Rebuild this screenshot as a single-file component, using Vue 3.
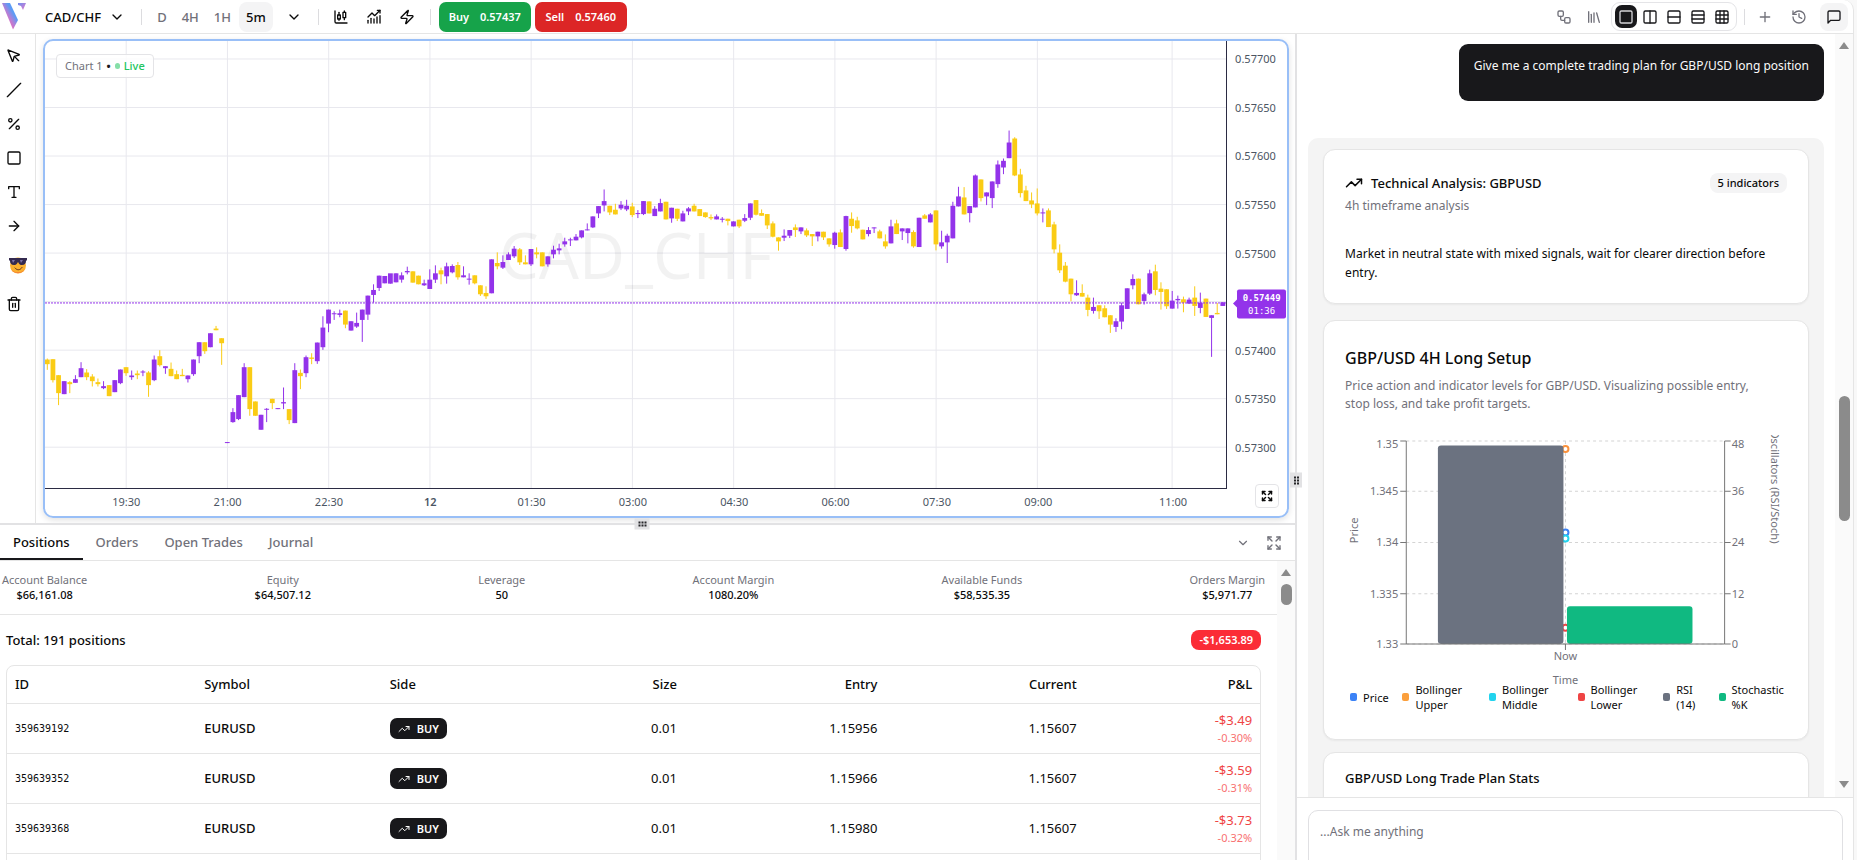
<script setup>
import { h, ref } from 'vue'

// line icons on a 24px grid
const glyphs = {
  chevron: ['m6 9 6 6 6-6'],
  candles: ['M9 5v4', 'M7 9h4v6H7z', 'M9 15v2', 'M17 3v2', 'M15 5h4v8h-4z', 'M17 13v3', 'M3 3v16a2 2 0 0 0 2 2h16'],
  indicators: ['M3 21v-4', 'M7.500 21v-7', 'M12 21v-6', 'M16.500 21v-9', 'M21 21V10', 'm3 12 6-6 4 4 8-8', 'M17 2h4v4'],
  zap: ['M4 14a1 1 0 0 1-.78-1.63l9.9-10.2a.5.5 0 0 1 .86.46l-1.92 6.02A1 1 0 0 0 13 10h7a1 1 0 0 1 .78 1.63l-9.9 10.2a.5.5 0 0 1-.86-.46l1.92-6.02A1 1 0 0 0 11 14z'],
  cursor: ['M12.586 12.586 19 19', 'M3.688 3.037a.497.497 0 0 0-.651.651l6.5 15.999a.501.501 0 0 0 .947-.062l1.569-6.083a2 2 0 0 1 1.448-1.479l6.124-1.579a.5.5 0 0 0 .063-.947z'],
  line: ['M2 22 22 2'],
  percent: ['M19 5 5 19', 'M9 6.500a2.500 2.500 0 1 1-5 0 2.500 2.500 0 0 1 5 0z', 'M20 17.500a2.500 2.500 0 1 1-5 0 2.500 2.500 0 0 1 5 0z'],
  square: ['M5 3h14a2 2 0 0 1 2 2v14a2 2 0 0 1-2 2H5a2 2 0 0 1-2-2V5a2 2 0 0 1 2-2z'],
  text: ['M4 7V4h16v3', 'M9 20h6', 'M12 4v16'],
  arrow: ['M5 12h14', 'm12 5 7 7-7 7'],
  trash: ['M3 6h18', 'M19 6v14c0 1-1 2-2 2H7c-1 0-2-1-2-2V6', 'M8 6V4c0-1 1-2 2-2h4c1 0 2 1 2 2v2', 'M10 11v6', 'M14 11v6'],
  trend: ['m22 7-8.500 8.500-5-5L2 17', 'M16 7h6v6'],
  workflow: ['M5 3h4a2 2 0 0 1 2 2v4a2 2 0 0 1-2 2H5a2 2 0 0 1-2-2V5a2 2 0 0 1 2-2z', 'M7 11v4a2 2 0 0 0 2 2h4', 'M15 13h4a2 2 0 0 1 2 2v4a2 2 0 0 1-2 2h-4a2 2 0 0 1-2-2v-4a2 2 0 0 1 2-2z'],
  library: ['m16 6 4 14', 'M12 6v14', 'M8 8v12', 'M4 4v16'],
  plus: ['M5 12h14', 'M12 5v14'],
  history: ['M3 12a9 9 0 1 0 9-9 9.750 9.750 0 0 0-6.740 2.740L3 8', 'M3 3v5h5', 'M12 7v5l4 2'],
  message: ['M21 15a2 2 0 0 1-2 2H7l-4 4V5a2 2 0 0 1 2-2h14a2 2 0 0 1 2 2z'],
  expand: ['m15 15 6 6', 'm15 9 6-6', 'M21 16v5h-5', 'M21 8V3h-5', 'M3 16v5h5', 'm3 21 6-6', 'M3 8V3h5', 'M9 9 3 3'],
}
glyphs.cols = [...glyphs.square, 'M12 3v18']
glyphs.rows = [...glyphs.square, 'M3 12h18']
glyphs.rows3 = [...glyphs.square, 'M3 9h18', 'M3 15h18']
glyphs.grid = [...glyphs.square, 'M3 9h18', 'M3 15h18', 'M9 3v18', 'M15 3v18']

const Icon = (props) => h('svg', {
  width: props.size, height: props.size, viewBox: '0 0 24 24', fill: 'none',
  stroke: 'currentColor', 'stroke-width': 2, 'stroke-linecap': 'round', 'stroke-linejoin': 'round', 'aria-hidden': true,
}, glyphs[props.name].map((d) => h('path', { d })))
Icon.props = { name: String, size: { type: Number, default: 16 } }

const frames = ['D', '4H', '1H', '5m']
const frame = ref('5m')
const layouts = ['square', 'cols', 'rows', 'rows3', 'grid']
const layout = ref('square')
const tools = ['cursor', 'line', 'percent', 'square', 'text', 'arrow']

// candles: colour (p up / y down), high, top, bottom, low; each block is relative to its base level
const blocks = [
  [900, `y178,181,195,212 y180,180,243,250 y228,228,282,318 p246,246,285,285 y246,249,255,282 p228,240,251,251 p189,207,234,234
    y210,220,234,243 y225,232,246,262 y238,249,255,262 p246,261,267,270 y258,258,291,291 p243,243,279,279 p211,211,252,255
    y204,204,222,230 p214,229,234,242 y214,223,228,240 p213,217,220,231 y216,220,258,293 p169,181,243,246 y153,171,198,202
    p201,201,207,224 y190,209,231,231 y214,225,240,240 y209,227,231,231 p229,229,240,250 p181,181,225,230 p129,129,171,192
    y129,129,156,164 p102,102,144,144 y80,88,93,93 y117,117,132,197 p429,429,432,432 p327,339,369,371 p288,288,360,363
    p192,204,294,294 y204,204,330,350 y307,307,350,350 p347,347,392,392 p327,329,332,369 y299,299,312,330 p327,327,330,330
    p265,309,313,330 y330,330,363,375 p192,213,372,372 y211,221,231,270 p169,174,222,234 y162,175,179,195 p130,130,186,194
    p51,85,144,152 p31,31,73,99 p36,42,45,62 p31,42,47,54 y34,34,76,87 p66,66,94,94 p40,71,82,86 p31,31,62,128`],
  [0, `p889,889,946,962 p855,872,887,910 p829,829,866,875 p830,830,852,852 p828,822,853,853 p822,822,849,849`],
  [510, `p309,318,331,340 p292,305,309,315 y306,306,340,340 y319,319,345,345 p331,342,348,350 p300,331,359,359 p288,312,331,341
    y295,303,315,345 p280,291,321,343 p285,290,309,312 y278,287,324,331 p291,318,324,324 p312,328,331,346 y318,318,342,345
    y348,348,375,380 y351,371,381,389 p270,270,372,372 y249,281,291,300 p258,278,295,299 p249,255,272,272 p230,238,261,266
    y236,240,279,287 y258,279,285,285 p239,239,285,290 y234,249,255,267 y249,249,291,291 p261,261,285,292 p229,241,255,267
    p223,237,243,255 p205,216,225,232 p205,210,213,230 p194,202,213,213 p183,183,204,207 p162,180,183,183 p141,141,174,176
    p110,110,132,146 p60,95,108,126 y109,109,129,137 y103,121,135,135 p95,106,117,122 p91,109,120,125 y100,111,137,143
    p122,131,134,146 p95,95,134,137 y96,96,132,132 p110,118,140,140 p88,101,126,126 y97,97,150,150 p115,115,147,160
    y118,118,148,155 p124,132,156,156 p113,117,126,137 y103,109,126,126 y119,119,140,140 y129,129,143,145 y135,143,147,152
    p135,141,150,150 p143,148,151,159 y148,148,155,168 p156,156,171,171 y151,151,171,176 p134,146,154,158 p102,102,145,152
    y92,92,136,138 y120,131,139,139 y134,134,168,179 y156,162,202,204 y204,204,216,244 p180,199,205,215 p182,182,199,206
    y165,174,182,203 p174,174,186,194`],
  [330, `y357,363,378,383 y374,374,381,410 p367,367,381,396 y367,367,384,392 y387,387,405,412 p367,370,407,418 y360,369,413,413
    p319,320,419,424 y309,328,350,370 y322,333,357,360 y361,361,390,390 p353,362,374,381 p354,354,357,371 y361,366,387,387
    y375,396,411,418 p331,351,402,402 y331,342,374,374 p357,357,366,392 p357,357,371,402 y363,368,411,415 p325,325,413,413
    y314,318,328,328 p311,315,339,339 y303,303,405,423 p364,399,411,418 p373,379,399,461 p277,289,387,387 p232,261,291,291
    y233,264,315,315 p290,290,311,339 p195,198,294,294 y210,210,266,276 p249,249,261,287 p216,216,266,296 p153,165,224,235
    p147,154,174,194 p63,99,146,146 y83,87,198,200 y178,195,251,264 y229,243,275,275 y249,273,285,296 y237,282,312,318
    p297,309,312,339 y297,303,353,353 y337,345,420,432 y405,430,483,491 y458,469,517,519 y508,508,555,576 p513,551,558,560
    y525,551,562,562 y556,565,602,621 p565,593,605,613 y588,588,606,629 y588,597,624,624 y618,618,646,671 p627,636,653,668
    p580,588,637,660 p537,537,599,599 p495,509,528,540 y508,508,585,585`],
  [720, `p160,165,185,196 p91,102,163,167 y76,96,152,168 y129,148,158,211 y150,150,201,209 p155,184,208,208 p169,179,183,208
    y172,180,190,219 p175,181,193,193 y141,175,200,230 p160,190,206,222 y178,178,233,233 p228,228,236,353 y191,221,225,225
    p189,189,200,200`],
]
const candles = blocks
  .flatMap(([base, rows]) => rows.trim().split(/\s+/).map((row) => {
    const [high, top, bottom, low] = row.slice(1).split(',').map((n) => Number(n) + base)
    return { up: row[0] === 'p', high, top, bottom, low }
  }))
  .map((c, i) => ({ ...c, x: 2.3 + i * 5.624 }))

const PLOT = { w: 1181, top: 124, h: 1343 }
const times = ['19:30', '21:00', '22:30', '12', '01:30', '03:00', '04:30', '06:00', '07:30', '09:00', '11:00']
  .map((label, i) => ({ label, x: label === '11:00' ? 1127 : 81.2 + i * 101.23 }))
const prices = Array.from({ length: 9 }, (_, i) => ({
  label: (0.577 - i * 0.0005).toFixed(5),
  y: 178 + i * 145.8,
}))
const pct = (v, total) => `${(v / total) * 100}%`

const tabs = ['Positions', 'Orders', 'Open Trades', 'Journal']
const tab = ref('Positions')
const stats = [
  ['Account Balance', '$66,161.08'],
  ['Equity', '$64,507.12'],
  ['Leverage', '50'],
  ['Account Margin', '1080.20%'],
  ['Available Funds', '$58,535.35'],
  ['Orders Margin', '$5,971.77'],
]
const positions = [
  { id: '359639192', entry: '1.15956', pl: '-$3.49', rate: '-0.30%' },
  { id: '359639352', entry: '1.15966', pl: '-$3.59', rate: '-0.31%' },
  { id: '359639368', entry: '1.15980', pl: '-$3.73', rate: '-0.32%' },
]

const ticks = [
  { y: 6, left: '1.35', right: '48' },
  { y: 56, left: '1.345', right: '36' },
  { y: 107, left: '1.34', right: '24' },
  { y: 158, left: '1.335', right: '12' },
  { y: 208, left: '1.33', right: '0' },
]
const dots = [
  { y: 14, color: '#fb923c' },
  { y: 97, color: '#3b82f6' },
  { y: 103, color: '#22d3ee' },
  { y: 192, color: '#ef4444' },
]
const legend = [
  ['Price', '#3b82f6'],
  ['Bollinger Upper', '#fb9f3c'],
  ['Bollinger Middle', '#22d3ee'],
  ['Bollinger Lower', '#ef4444'],
  ['RSI (14)', '#6b7280'],
  ['Stochastic %K', '#10b981'],
]
const draft = ref('')
</script>

<template>
  <div class="app">
    <header class="topbar">
      <svg class="logo" width="24" height="27" viewBox="0 0 24 27" aria-hidden="true">
        <defs>
          <linearGradient id="lg" gradientUnits="userSpaceOnUse" x1="4" y1="18" x2="14" y2="12">
            <stop offset="0" stop-color="#f06bb8" /><stop offset="0.450" stop-color="#b57fd6" /><stop offset="0.900" stop-color="#5b9bf5" />
          </linearGradient>
          <linearGradient id="lg2" x1="0" y1="0" x2="1" y2="1">
            <stop offset="0" stop-color="#6d8ff0" /><stop offset="1" stop-color="#e879c9" />
          </linearGradient>
        </defs>
        <path d="M0 0h8l8 17-5 9.500z" fill="url(#lg)" />
        <path d="M16 0h8l-3 7-2-4-3-1z" fill="url(#lg2)" />
      </svg>
      <button class="pair">CAD/CHF <Icon name="chevron" /></button>
      <i class="sep"></i>
      <nav class="frames">
        <button v-for="f in frames" :key="f" :class="{ on: f === frame }" @click="frame = f">{{ f }}</button>
        <button class="more" aria-label="More timeframes"><Icon name="chevron" /></button>
      </nav>
      <i class="sep"></i>
      <div class="charting">
        <button aria-label="Chart type"><Icon name="candles" /></button>
        <button aria-label="Indicators"><Icon name="indicators" /></button>
        <button aria-label="Quick trade"><Icon name="zap" /></button>
      </div>
      <i class="sep"></i>
      <div class="deals">
        <button class="buy"><span>Buy</span><span>0.57437</span></button>
        <button class="sell"><span>Sell</span><span>0.57460</span></button>
      </div>
      <div class="right-tools">
        <button aria-label="Workflows"><Icon name="workflow" /></button>
        <button aria-label="Library"><Icon name="library" /></button>
        <div class="layouts">
          <button v-for="l in layouts" :key="l" :class="{ on: l === layout }" :aria-label="l" @click="layout = l"><Icon :name="l" /></button>
        </div>
        <i class="sep"></i>
        <button class="wide" aria-label="Add"><Icon name="plus" /></button>
        <button class="wide" aria-label="History"><Icon name="history" /></button>
        <button class="chat-toggle" aria-label="Chat"><Icon name="message" /></button>
      </div>
    </header>

    <div class="main">
      <div class="left">
        <div class="upper">
          <aside class="toolbar">
            <button v-for="t in tools" :key="t" :aria-label="t"><Icon :name="t" /></button>
            <button class="emoji" aria-label="Stickers">
              <svg width="18" height="18" viewBox="0 0 18 18" aria-hidden="true">
                <circle cx="9" cy="9.500" r="8" fill="#fbb02e" />
                <path d="M2 13a8 8 0 0 0 14 0 9 9 0 0 1-14 0" fill="#f4743b" />
                <path d="M0 2h18v2l-1 1c0 2-1 4-4 4s-3-2-4-3c-1 1-1 3-4 3S1 7 1 5L0 4z" fill="#342a4f" />
                <path d="M3 4h3L4 7zM11 4h3l-2 3z" fill="#7d73a8" />
                <path d="M6 12c2 2.500 5 2.500 7-.5" fill="none" stroke="#5b2c1b" stroke-linecap="round" />
              </svg>
            </button>
            <button aria-label="Delete drawings"><Icon name="trash" /></button>
          </aside>

          <section class="stage">
            <div class="frame">
              <div class="plot">
                <svg class="layer" :viewBox="`0 ${PLOT.top} ${PLOT.w} ${PLOT.h}`" preserveAspectRatio="none">
                  <line v-for="t in times" :key="t.label" class="gridline" :x1="t.x" :x2="t.x" y1="0" y2="1500" />
                  <line v-for="p in prices" :key="p.label" class="gridline" x1="0" :x2="PLOT.w" :y1="p.y" :y2="p.y" />
                </svg>
                <div class="watermark">CAD_CHF</div>
                <svg class="layer" :viewBox="`0 ${PLOT.top} ${PLOT.w} ${PLOT.h}`" preserveAspectRatio="none">
                  <g v-for="(c, i) in candles" :key="i" :class="c.up ? 'up' : 'down'">
                    <rect :x="c.x - 0.5" :y="c.high" width="1" :height="c.low - c.high" />
                    <rect :x="c.x - 2.4" :y="c.top" width="4.800" :height="Math.max(c.bottom - c.top, 3)" />
                  </g>
                  <line class="last" x1="0" :x2="PLOT.w" y1="911" y2="911" />
                </svg>
                <div class="tag">
                  <span>Chart 1</span><b>•</b><i></i><em>Live</em>
                </div>
              </div>
              <div class="price-axis">
                <template v-for="(p, i) in prices" :key="p.label">
                  <span v-if="i !== 5" :style="{ top: pct(p.y - PLOT.top, PLOT.h) }">{{ p.label }}</span>
                </template>
                <div class="now" :style="{ top: pct(911 - PLOT.top, PLOT.h) }"><strong>0.57449</strong><small>01:36</small></div>
              </div>
              <div class="time-axis">
                <span v-for="t in times" :key="t.label" :class="{ day: t.label === '12' }" :style="{ left: pct(t.x, PLOT.w) }">{{ t.label }}</span>
              </div>
              <button class="full" aria-label="Fullscreen chart"><Icon name="expand" :size="12" /></button>
            </div>
          </section>
        </div>

        <div class="split-h"><span class="grip"><i v-for="n in 6" :key="n"></i></span></div>

        <section class="lower">
          <div class="tabs">
            <button v-for="t in tabs" :key="t" :class="{ on: t === tab }" @click="tab = t">{{ t }}</button>
            <span class="tab-tools">
              <button aria-label="Collapse"><Icon name="chevron" :size="14" /></button>
              <button aria-label="Expand panel"><Icon name="expand" :size="16" /></button>
            </span>
          </div>
          <div class="scroller">
            <div class="content">
              <dl class="stats">
                <div v-for="[k, v] in stats" :key="k"><dt>{{ k }}</dt><dd>{{ v }}</dd></div>
              </dl>
              <div class="total"><span>Total: 191 positions</span><b>-$1,653.89</b></div>
              <div class="table-box">
                <table>
                  <colgroup>
                    <col class="c1" /><col class="c2" /><col class="c3" /><col class="c4" /><col class="c5" /><col class="c6" /><col />
                  </colgroup>
                  <thead>
                    <tr>
                      <th>ID</th><th>Symbol</th><th>Side</th>
                      <th class="num">Size</th><th class="num">Entry</th><th class="num">Current</th><th class="num">P&amp;L</th>
                    </tr>
                  </thead>
                  <tbody>
                    <tr v-for="p in positions" :key="p.id">
                      <td class="id">{{ p.id }}</td>
                      <td class="sym">EURUSD</td>
                      <td><span class="side"><Icon name="trend" :size="12" />BUY</span></td>
                      <td class="num">0.01</td>
                      <td class="num">{{ p.entry }}</td>
                      <td class="num">1.15607</td>
                      <td class="num pl">{{ p.pl }}<small>{{ p.rate }}</small></td>
                    </tr>
                  </tbody>
                </table>
              </div>
            </div>
            <div class="bar small"><i class="tri"></i><i class="thumb"></i></div>
          </div>
        </section>
      </div>

      <div class="split-v"><span class="grip"><i v-for="n in 6" :key="n"></i></span></div>

      <aside class="chat">
        <div class="scroller">
          <div class="thread">
            <p class="ask">Give me a complete trading plan for GBP/USD long position</p>
            <div class="reply">
              <article class="card ta">
                <div class="ta-head">
                  <Icon name="trend" :size="18" />
                  <h3>Technical Analysis: GBPUSD</h3>
                  <span class="pill">5 indicators</span>
                </div>
                <p class="muted">4h timeframe analysis</p>
                <p class="verdict">Market in neutral state with mixed signals, wait for clearer direction before entry.</p>
              </article>

              <article class="card setup">
                <h2>GBP/USD 4H Long Setup</h2>
                <p class="muted">Price action and indicator levels for GBP/USD. Visualizing possible entry, stop loss, and take profit targets.</p>
                <svg class="combo" viewBox="0 0 440 254">
                  <g class="dash">
                    <line v-for="t in ticks" :key="t.y" x1="61" x2="378" :y1="t.y" :y2="t.y" />
                    <line x1="219.500" x2="219.500" y1="6" y2="208" />
                  </g>
                  <circle v-for="d in dots" :key="d.y" cx="219.500" :cy="d.y" r="3" fill="#fff" :stroke="d.color" stroke-width="2" />
                  <rect x="92.500" y="10.500" width="125" height="197.500" rx="3" fill="#6b7280" />
                  <rect x="221" y="170.500" width="125" height="37.500" rx="3" fill="#10b981" />
                  <path class="axis" d="M61 6v202M378 6v202M61 208h317M219.500 208v6" />
                  <g v-for="t in ticks" :key="t.left">
                    <path class="axis" :d="`M55 ${t.y}h6M378 ${t.y}h6`" />
                    <text x="53" :y="t.y + (t.y === 6 ? 7 : 4)" text-anchor="end">{{ t.left }}</text>
                    <text x="385" :y="t.y + (t.y === 6 ? 7 : 4)">{{ t.right }}</text>
                  </g>
                  <text x="219.500" y="224" text-anchor="middle">Now</text>
                  <text x="219.500" y="248" text-anchor="middle">Time</text>
                  <text transform="translate(13 95) rotate(-90)" text-anchor="middle">Price</text>
                  <text transform="translate(424 108) rotate(90)" text-anchor="end">Oscillators (RSI/Stoch)</text>
                </svg>
                <ul class="legend">
                  <li v-for="[name, color] in legend" :key="name"><i :style="{ background: color }"></i><span>{{ name }}</span></li>
                </ul>
              </article>

              <article class="card plan"><h3>GBP/USD Long Trade Plan Stats</h3></article>
            </div>
          </div>
          <div class="bar"><i class="tri"></i><i class="thumb"></i><i class="tri down"></i></div>
        </div>
        <form class="composer" @submit.prevent>
          <textarea v-model="draft" aria-label="Message" placeholder="...Ask me anything"></textarea>
        </form>
      </aside>
    </div>
  </div>
</template>

<style>
body { margin: 0; background: #f8f8f8; }
</style>

<style scoped>
.app {
  display: flex;
  flex-direction: column;
  height: 100vh;
  margin-right: 3px;
  box-sizing: border-box;
  overflow: hidden;
  border-right: 1px solid #e5e5e5;
  border-top-right-radius: 10px;
  background: #fff;
  color: #0a0a0a;
  font: 13px/20px "Noto Sans", "Open Sans", sans-serif;
}
.app * { box-sizing: border-box; }
button { display: inline-flex; align-items: center; justify-content: center; padding: 0; border: 0; background: none; color: inherit; font: inherit; cursor: pointer; }
h2, h3, p, dl, dd, ul { margin: 0; padding: 0; }
svg { flex-shrink: 0; }

/* top bar */
.topbar { display: flex; flex-shrink: 0; align-items: center; height: 34px; padding-right: 5px; border-bottom: 1px solid #e5e5e5; }
.logo { margin-left: 2px; }
.pair { gap: 8px; margin-left: 19px; font-weight: 500; }
.sep { width: 1px; height: 16px; background: #dcdcdf; }
.pair + .sep { margin-left: 16px; }
.frames { display: flex; gap: 1px; margin: 0 12px 0 8px; }
.frames button { height: 30px; padding: 0 7px; border-radius: 8px; color: #71717a; font-weight: 500; }
.frames .on { background: #f4f4f5; color: #0a0a0a; }
.frames .more { width: 24px; margin-left: 8px; padding: 0; color: #0a0a0a; }
.charting { display: flex; gap: 5px; margin: 0 9px 0 8px; }
.charting button { width: 28px; height: 28px; }
.deals { display: flex; gap: 4px; margin-left: 8px; }
.deals button { gap: 11px; width: 92px; height: 30px; border-radius: 7px; color: #fff; font-size: 11px; font-weight: 600; }
.buy { background: #16a34a; }
.sell { background: #dc2626; }
.right-tools { display: flex; align-items: center; margin-left: auto; color: #71717a; }
.right-tools button { width: 30px; height: 28px; }
.layouts { display: flex; gap: 2px; margin: 0 7px 0 2px; padding: 2px 3px; border: 1px solid #e4e4e7; border-radius: 9px; color: #18181b; }
.right-tools .layouts button { width: 22px; height: 23px; border-radius: 7px; }
.layouts .on { background: #18181b; color: #d4d4d8; }
.right-tools .wide { width: 34px; }
.layouts + .sep { margin-right: 3px; }
.right-tools .chat-toggle { width: 28px; margin-left: 4px; border-radius: 8px; background: #f4f4f5; color: #18181b; }

.main { display: flex; flex: 1; min-height: 0; }
.left { display: flex; flex: 1; flex-direction: column; min-width: 0; }
.upper { display: flex; flex: 489 1 0; min-height: 0; }
.toolbar { display: flex; flex-direction: column; gap: 6px; width: 36px; padding-top: 8px; border-right: 1px solid #e5e5e5; }
.toolbar button { width: 27px; height: 28px; }
.toolbar .emoji { width: 35px; height: 38px; }

/* chart */
.stage { display: flex; flex: 1; min-width: 0; padding: 5px 6px 5px 7px; }
.frame {
  position: relative;
  display: grid;
  flex: 1;
  grid-template: minmax(0, 1fr) 27px / minmax(0, 1fr) 60px;
  overflow: hidden;
  border: 2px solid #99bff7;
  border-radius: 10px;
  box-shadow: 0 2px 6px rgba(0, 0, 0, .12);
}
.plot { position: relative; border-right: 1px solid #2b2b43; border-bottom: 1px solid #2b2b43; }
.layer { position: absolute; inset: 0; width: 100%; height: 100%; }
.layer line { vector-effect: non-scaling-stroke; }
.gridline { stroke: #e8e8ee; }
.watermark { position: absolute; inset: 0; display: grid; place-items: center; padding-bottom: 20px; color: rgba(0, 0, 0, .05); font-size: 63px; line-height: 80px; }
.up { fill: #9333ea; }
.down { fill: #facc15; }
.last { stroke: #9333ea; stroke-dasharray: 2 1; }
.tag {
  position: absolute; top: 13px; left: 11px;
  display: flex; align-items: center; height: 24px; padding: 0 8px;
  border: 1px solid #e4e4e7; border-radius: 4px; background: rgba(255, 255, 255, .8);
  color: #71717a; font-size: 11px;
}
.tag b { margin: 0 4px; color: #18181b; }
.tag i { width: 5px; height: 6px; margin-right: 4px; border-radius: 3px; background: #86dfa8; }
.tag em { color: #22c55e; font-style: normal; font-weight: 500; }
.price-axis, .time-axis { position: relative; color: #4b5563; font-size: 11px; line-height: 16px; }
.price-axis > span { position: absolute; left: 8px; transform: translateY(-50%); }
.time-axis span { position: absolute; top: 5px; transform: translateX(-50%); }
.time-axis .day { font-weight: 600; }
.now {
  position: absolute; right: 1px; left: 10px;
  display: flex; flex-direction: column; align-items: center; padding: 2px 0 1px;
  border-radius: 2px; background: #9333ea; color: #fff;
  font: 9px/13px "DejaVu Sans Mono", monospace; transform: translateY(-50%);
}
.now::before { content: ''; position: absolute; top: 10px; left: -4px; border: 4px solid transparent; border-right-color: #9333ea; border-left: 0; }
.now small { font-size: 9px; }
.full { position: absolute; right: 8px; bottom: 8px; width: 24px; height: 24px; border: 1px solid #e4e4e7; border-radius: 4px; background: #fff; }
.full svg { stroke-width: 3; }

/* resizers */
.split-h { position: relative; flex-shrink: 0; height: 2px; background: #e2e2e4; }
.split-v { position: relative; flex-shrink: 0; width: 2px; background: #e2e2e4; }
.grip { position: absolute; z-index: 2; top: 50%; left: 50%; display: grid; grid-template-columns: repeat(3, 2px); gap: 1px; place-content: center; width: 15px; height: 11px; background: #e2e2e4; transform: translate(-50%, -50%); }
.grip i { width: 2px; height: 2px; background: #27272a; }
.split-h .grip { left: 642px; }
.split-v .grip { top: 54%; grid-template-columns: repeat(2, 2px); width: 12px; height: 15px; }

/* positions panel */
.lower { display: flex; flex: 335 1 0; flex-direction: column; min-height: 0; }
.tabs { display: flex; flex-shrink: 0; height: 36px; border-bottom: 1px solid #e5e5e5; color: #71717a; font-weight: 500; }
.tabs > button { padding: 0 13px; border-bottom: 2px solid transparent; }
.tabs > .on { border-color: #18181b; color: #0a0a0a; }
.tab-tools { display: flex; gap: 16px; margin-left: auto; padding-right: 13px; }
.scroller { display: flex; flex: 1; min-height: 0; overflow: hidden; }
.content { flex: 1; min-width: 0; }
.stats { display: flex; justify-content: space-between; height: 54px; padding: 11px 12px 0 2px; border-bottom: 1px solid #e5e5e5; font-size: 11px; line-height: 15px; text-align: center; }
.stats dt { color: #71717a; }
.stats dd { font-weight: 500; }
.total { display: flex; align-items: center; justify-content: space-between; height: 50px; padding: 0 16px 0 6px; font-weight: 500; }
.total b { padding: 0 8px; border-radius: 8px; background: #fb2c36; color: #fff; font-size: 11px; font-weight: 600; }
.table-box { margin: 0 16px 0 6px; padding-bottom: 20px; border: 1px solid #e5e5e5; border-radius: 8px 8px 0 0; }
table { width: 100%; border-collapse: collapse; table-layout: fixed; }
.c1 { width: 15.1%; }
.c2 { width: 14.8%; }
.c3 { width: 12%; }
.c4 { width: 12.2%; }
.c5 { width: 16%; }
.c6 { width: 15.9%; }
th, td { padding: 0 8px; border-bottom: 1px solid #e5e5e5; text-align: left; }
th { height: 37px; font-weight: 500; }
td { height: 50px; }
.num { text-align: right; }
.id { font: 10px "DejaVu Sans Mono", monospace; }
.sym { font-weight: 500; }
.side { display: inline-flex; align-items: center; gap: 7px; height: 21px; padding: 0 8px; border-radius: 7px; background: #18181b; color: #fff; font-size: 11px; font-weight: 600; vertical-align: middle; }
.pl { padding-top: 2px; color: #ef4444; line-height: 17px; }
.pl small { display: block; color: #f87171; font-size: 11px; }

/* scrollbars */
.bar { display: flex; flex-shrink: 0; flex-direction: column; align-items: center; width: 18px; padding-top: 8px; background: #fafafa; }
.tri { border: 5px solid transparent; border-top: 0; border-bottom: 7px solid #8b8b8b; }
.tri.down { margin: auto 0 9px; transform: rotate(180deg); }
.thumb { width: 11px; height: 125px; margin-top: 347px; border-radius: 6px; background: #8b8b8b; }
.small .thumb { height: 21px; margin-top: 8px; }

/* assistant */
.chat { display: flex; flex: 0 0 30%; flex-direction: column; min-width: 0; }
.thread { display: flex; flex: 1; flex-direction: column; min-width: 0; padding: 10px 11px 0; font-size: 12px; }
.ask { align-self: flex-end; min-height: 57px; padding: 12px 15px; border-radius: 9px; background: #18181b; color: #fafafa; }
.reply { display: flex; flex-direction: column; margin-top: 37px; padding: 11px 15px; border-radius: 10px; background: #f4f4f4; }
.card { padding: 0 21px; border: 1px solid #e5e5e5; border-radius: 12px; background: #fff; box-shadow: 0 1px 2px rgba(0, 0, 0, .05); }
h3 { font-size: 13px; font-weight: 500; }
.muted { color: #71717a; }
.ta { padding: 23px 21px 21px; }
.ta-head { display: flex; align-items: center; gap: 8px; }
.pill { margin-left: auto; padding: 0 8px; border-radius: 8px; background: #f4f4f5; font-size: 11px; font-weight: 500; }
.ta .muted { margin-top: 3px; }
.verdict { margin-top: 28px; line-height: 19px; }
.setup { margin-top: 16px; padding-top: 25px; padding-bottom: 27px; }
.setup h2 { font-size: 16px; line-height: 24px; font-weight: 500; }
.setup .muted { margin-top: 7px; padding-right: 16px; line-height: 18px; }
.combo { display: block; width: 100%; margin-top: 22px; overflow: hidden; }
.combo text { fill: #71717a; font-size: 11px; }
.dash line { stroke: #d4d4d4; stroke-dasharray: 3 3; }
.axis { fill: none; stroke: #777; }
.legend { display: grid; grid-template-columns: 52fr 86fr 88fr 85fr 55fr 68fr; margin-top: -8px; padding-left: 5px; list-style: none; font-size: 11px; line-height: 15px; }
.legend li { display: flex; align-items: center; gap: 6px; }
.legend i { flex-shrink: 0; width: 7px; height: 8px; border-radius: 2px; }
.legend span { width: min-content; }
.plan { height: 60px; margin-top: 12px; padding-top: 15px; }
.composer { flex-shrink: 0; height: 63px; padding: 12px 10px 0 11px; border-top: 1px solid #e5e5e5; }
textarea { display: block; width: 100%; height: 80px; padding: 11px; border: 1px solid #e0e0e3; border-radius: 10px; outline: 0; background: #fff; color: inherit; font: inherit; font-size: 12px; line-height: 20px; resize: none; }
textarea::placeholder { color: #71717a; }
</style>
